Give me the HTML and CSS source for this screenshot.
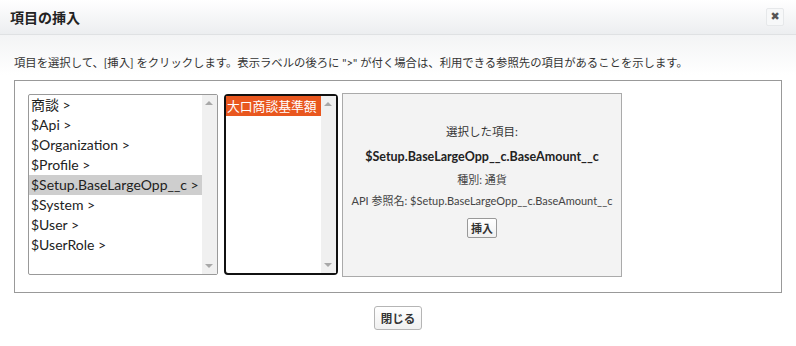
FILE: index.html
```html
<!DOCTYPE html>
<html lang="ja">

<head>
    <meta charset="UTF-8">
    <meta name="viewport" content="width=device-width, initial-scale=1.0">
    <title>項目の挿入</title>
    <link rel="stylesheet" href="styles.css">
</head>

<body>
    <div class="dialog">
        <div class="dialog-header">
            <h1>項目の挿入</h1>
            <button type="button" class="close-x">&#x2716;</button>
        </div>
        <div class="dialog-body">
            <p class="hint">項目を選択して、[挿入] をクリックします。表示ラベルの後ろに "&gt;" が付く場合は、利用できる参照先の項目があることを示します。</p>

            <div class="picker">
                <div class="listbox list-objects">
                    <ul class="options">
                        <li>商談 &gt;</li>
                        <li>$Api &gt;</li>
                        <li>$Organization &gt;</li>
                        <li>$Profile &gt;</li>
                        <li class="selected">$Setup.BaseLargeOpp__c &gt;</li>
                        <li>$System &gt;</li>
                        <li>$User &gt;</li>
                        <li>$UserRole &gt;</li>
                    </ul>
                    <div class="scrollbar"><span class="up"></span><span class="down"></span></div>
                </div>

                <div class="listbox list-fields">
                    <ul class="options">
                        <li class="active">大口商談基準額</li>
                    </ul>
                    <div class="scrollbar"><span class="up"></span><span class="down"></span></div>
                </div>

                <div class="detail">
                    <p class="detail-label">選択した項目:</p>
                    <p class="detail-name">$Setup.BaseLargeOpp__c.BaseAmount__c</p>
                    <p class="detail-meta">種別: 通貨</p>
                    <p class="detail-meta">API 参照名: $Setup.BaseLargeOpp__c.BaseAmount__c</p>
                    <button type="button" class="btn btn-small">挿入</button>
                </div>
            </div>

            <div class="footer">
                <button type="button" class="btn">閉じる</button>
            </div>
        </div>
    </div>
</body>

</html>
```

FILE: styles.css
```css
body {
    margin: 0;
    font-family: Lato, "Noto Sans CJK JP", sans-serif;
    color: #222;
    background: #fff;
}

.dialog {
    width: 796px;
    height: 346px;
    overflow: hidden;
}

.dialog-header {
    display: flex;
    justify-content: space-between;
    align-items: center;
    height: 34px;
    padding: 0 12px 0 10px;
    border-bottom: 1px solid #dfe1e3;
    background: linear-gradient(to bottom, #ffffff, #eceef0);
}

.dialog-header h1 {
    margin: 0;
    font-size: 14px;
    font-weight: bold;
    color: #222;
}

.close-x {
    width: 18px;
    height: 18px;
    padding: 0;
    border: 1px solid #e6e8ea;
    border-radius: 2px;
    background: #f7f8f9;
    color: #555;
    font-family: "DejaVu Sans", sans-serif;
    font-size: 11px;
    line-height: 16px;
    cursor: pointer;
}

.dialog-body {
    padding: 21px 14px 0;
    background: linear-gradient(to bottom, #f3f4f5, #ffffff 40px);
}

.hint {
    margin: 0;
    font-size: 11.35px;
    line-height: 14px;
    color: #333;
}

.picker {
    display: flex;
    align-items: flex-start;
    gap: 4px;
    height: 199px;
    margin-top: 10px;
    padding: 12px 13px 0;
    border: 1px solid #999;
}

.listbox {
    position: relative;
    display: flex;
    height: 181px;
    margin-top: 1px;
    box-sizing: border-box;
    background: #fff;
}

.list-objects {
    width: 190px;
    border: 1px solid #999;
    border-radius: 2px;
}

.list-fields {
    width: 114px;
    margin-left: 2px;
    border: 2px solid #111;
    border-radius: 4px;
}

.options {
    flex: 1;
    min-width: 0;
    margin: 0;
    padding: 0;
    list-style: none;
    font-size: 14px;
}

.options li {
    height: 20px;
    line-height: 20px;
    padding-left: 2px;
    white-space: nowrap;
}

.options li.selected {
    background-color: #cecece;
}

.options li.active {
    background-color: #e9571f;
    color: #fff;
    padding-left: 1px;
    font-size: 12.8px;
    overflow: hidden;
}

.scrollbar {
    position: relative;
    flex: 0 0 15px;
    background: #f0f0f0;
}

.scrollbar span {
    position: absolute;
    left: 3px;
    width: 0;
    height: 0;
    border-left: 4px solid transparent;
    border-right: 4px solid transparent;
}

.scrollbar .up {
    top: 6px;
    border-bottom: 4px solid #a8a8a8;
}

.scrollbar .down {
    bottom: 6px;
    border-top: 4px solid #a8a8a8;
}

.detail {
    display: flex;
    flex-direction: column;
    align-items: center;
    width: 278px;
    height: 182px;
    border: 1px solid #aaa;
    background: #f3f3f3;
    text-align: center;
}

.detail p {
    margin: 0;
    color: #333;
}

.detail-label {
    margin-top: 30px !important;
    font-size: 11.5px;
    line-height: 16px;
}

.detail-name {
    margin-top: 8px !important;
    font-size: 12.5px;
    font-weight: bold;
    line-height: 18px;
    color: #222 !important;
}

.detail-meta {
    margin-top: 7px !important;
    font-size: 11px;
    line-height: 14px;
    color: #444 !important;
}

.btn {
    padding: 3px 6px;
    border: 1px solid #b5b5b5;
    border-radius: 3px;
    background: linear-gradient(to bottom, #ffffff, #f0f0f0);
    font-family: Lato, "Noto Sans CJK JP", sans-serif;
    font-size: 11.5px;
    font-weight: bold;
    color: #333;
    cursor: pointer;
}

.btn-small {
    margin-top: 10px;
    padding: 1px 3px;
    font-size: 11px;
    border-color: #999;
    border-radius: 2px;
}

.footer {
    display: flex;
    justify-content: center;
    padding-top: 13px;
}
```
